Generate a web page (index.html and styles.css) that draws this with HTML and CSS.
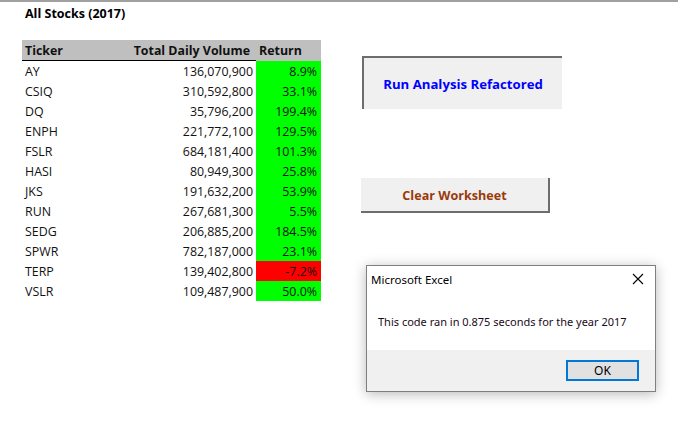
FILE: index.html
```html
<!DOCTYPE html>
<html>
<head>
<meta charset="utf-8">
<link rel="stylesheet" href="styles.css">
</head>
<body>
<div class="topline"></div>
<div class="sheet">
  <div class="left">
    <div class="title">All Stocks (2017)</div>
    <div class="table">
      <div class="row head">
        <div class="c-t">Ticker</div>
        <div class="c-v">Total Daily Volume</div>
        <div class="c-r">Return</div>
      </div>
      <div class="row"><div class="c-t">AY</div><div class="c-v">136,070,900</div><div class="c-r pos">8.9%</div></div>
      <div class="row"><div class="c-t">CSIQ</div><div class="c-v">310,592,800</div><div class="c-r pos">33.1%</div></div>
      <div class="row"><div class="c-t">DQ</div><div class="c-v">35,796,200</div><div class="c-r pos">199.4%</div></div>
      <div class="row"><div class="c-t">ENPH</div><div class="c-v">221,772,100</div><div class="c-r pos">129.5%</div></div>
      <div class="row"><div class="c-t">FSLR</div><div class="c-v">684,181,400</div><div class="c-r pos">101.3%</div></div>
      <div class="row"><div class="c-t">HASI</div><div class="c-v">80,949,300</div><div class="c-r pos">25.8%</div></div>
      <div class="row"><div class="c-t">JKS</div><div class="c-v">191,632,200</div><div class="c-r pos">53.9%</div></div>
      <div class="row"><div class="c-t">RUN</div><div class="c-v">267,681,300</div><div class="c-r pos">5.5%</div></div>
      <div class="row"><div class="c-t">SEDG</div><div class="c-v">206,885,200</div><div class="c-r pos">184.5%</div></div>
      <div class="row"><div class="c-t">SPWR</div><div class="c-v">782,187,000</div><div class="c-r pos">23.1%</div></div>
      <div class="row"><div class="c-t">TERP</div><div class="c-v">139,402,800</div><div class="c-r neg">-7.2%</div></div>
      <div class="row"><div class="c-t">VSLR</div><div class="c-v">109,487,900</div><div class="c-r pos">50.0%</div></div>
    </div>
  </div>
  <div class="right">
    <div class="btn btn-run">Run Analysis Refactored</div>
    <div class="btn btn-clear">Clear Worksheet</div>
  </div>
</div>
<div class="dialog">
  <div class="dlg-title">
    <span>Microsoft Excel</span>
    <svg class="close" width="12" height="12" viewBox="0 0 12 12"><path d="M1 1 L11 11 M11 1 L1 11" stroke="#000" stroke-width="1.1" fill="none"/></svg>
  </div>
  <div class="dlg-body">This code ran in 0.875 seconds for the year 2017</div>
  <div class="dlg-foot"><div class="ok">OK</div></div>
</div>
</body>
</html>
```
FILE: styles.css
```css
html, body {
  margin: 0;
  padding: 0;
  background: #fff;
  width: 678px;
  height: 438px;
  overflow: hidden;
  position: relative;
  font-family: "Open Sans", "Noto Sans", sans-serif;
  color: #000;
}
.topline {
  height: 2px;
  background: #a0a0a0;
}
.sheet {
  display: flex;
}
.left {
  padding-left: 22px;
  width: 299px;
}
.title {
  font-weight: bold;
  font-size: 12.5px;
  height: 20px;
  line-height: 20px;
  padding-left: 3px;
  margin-top: 2px;
  margin-bottom: 16px;
}
.table {
  font-size: 12.4px;
  color: #111;
}
.row {
  display: flex;
  height: 20px;
  line-height: 22px;
}
.c-t {
  width: 105px;
  padding-left: 3px;
}
.c-v {
  width: 123px;
  padding-right: 3px;
  text-align: right;
}
.c-r {
  width: 61px;
  padding-right: 4px;
  text-align: right;
}
.head {
  background: #bfbfbf;
  font-weight: bold;
  height: 21px;
  line-height: 21px;
}
.head .c-t, .head .c-v {
  height: 20px;
  border-bottom: 1px solid #000;
}
.head .c-v {
  padding-right: 6px;
  width: 120px;
}
.head .c-r {
  text-align: left;
  padding-left: 3px;
  padding-right: 0;
  width: 62px;
}
.pos { background: #00ff00; }
.neg { background: #ff0000; }

.right {
  padding-left: 41px;
}
.btn {
  background: #f0f0f0;
  font-weight: bold;
  box-sizing: border-box;
  display: flex;
  align-items: center;
  justify-content: center;
}
.btn-run {
  margin-top: 54px;
  width: 200px;
  height: 53px;
  border-top: 2px solid #6d6d6d;
  border-left: 2px solid #6d6d6d;
  color: #0000ff;
  font-size: 13.2px;
}
.btn-clear {
  margin-top: 69px;
  margin-left: -1px;
  width: 189px;
  height: 35px;
  border-right: 2px solid #6d6d6d;
  border-bottom: 2px solid #6d6d6d;
  color: #9a3a0c;
  font-size: 12.6px;
  padding-top: 2px;
}

.dialog {
  position: absolute;
  left: 366px;
  top: 265px;
  width: 290px;
  height: 127px;
  box-sizing: border-box;
  border: 1px solid #7f7f7f;
  background: #fff;
  box-shadow: 0 2px 12px rgba(0,0,0,0.28);
  font-family: "Noto Sans", "Open Sans", sans-serif;
  font-size: 11px;
  display: flex;
  flex-direction: column;
}
.dlg-title {
  height: 26px;
  display: flex;
  align-items: center;
  justify-content: space-between;
  padding: 0 11px 0 4px;
  font-size: 11.5px;
}
.close {
  display: block;
}
.dlg-body {
  height: 58px;
  display: flex;
  align-items: center;
  padding-left: 11px;
  color: #1a0a1a;
}
.dlg-foot {
  flex: 1;
  background: #f0f0f0;
  display: flex;
  justify-content: flex-end;
  align-items: flex-start;
  padding-top: 10px;
  padding-right: 16px;
}
.ok {
  width: 73px;
  height: 21px;
  box-sizing: border-box;
  border: 2px solid #0078d7;
  background: #e1e1e1;
  display: flex;
  align-items: center;
  justify-content: center;
  font-size: 12px;
}
```
